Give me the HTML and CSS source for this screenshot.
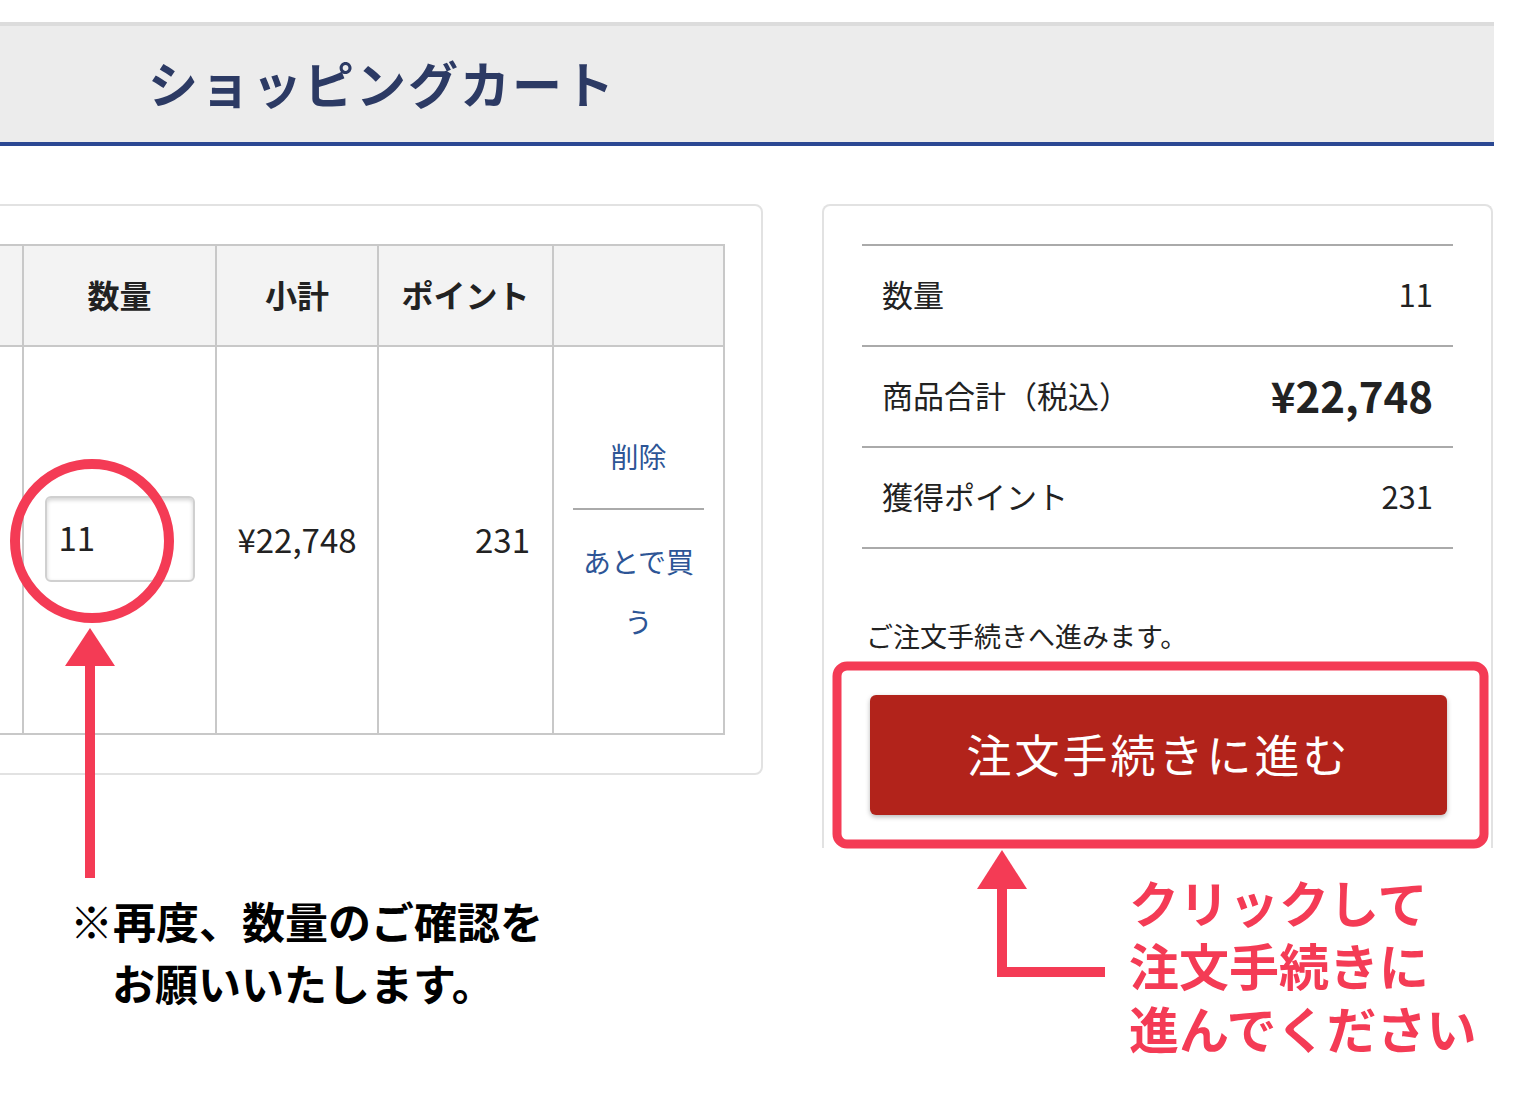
FILE: index.html
```html
<!DOCTYPE html>
<html lang="ja">
<head>
  <meta charset="UTF-8">
  <meta name="viewport" content="width=device-width, initial-scale=1.0">
  <title>ショッピングカート</title>
  <link rel="stylesheet" href="styles.css">
</head>
<body>
  <div class="page">
    <!-- ページタイトル -->
    <header class="page-head">
      <h1>ショッピングカート</h1>
    </header>

    <div class="cart">
      <!-- カート商品一覧 -->
      <section class="cart-items">
        <table class="cart-table">
          <thead>
            <tr>
              <th class="col-item"></th>
              <th class="col-qty">数量</th>
              <th class="col-sub">小計</th>
              <th class="col-pt">ポイント</th>
              <th class="col-act"></th>
            </tr>
          </thead>
          <tbody>
            <tr>
              <td class="cell-item"></td>
              <td class="cell-qty"><input class="qty-input" type="text" value="11"></td>
              <td class="cell-sub">¥22,748</td>
              <td class="cell-pt">231</td>
              <td class="cell-act">
                <a href="#" class="act-link">削除</a>
                <hr class="act-sep">
                <a href="#" class="act-link">あとで買う</a>
              </td>
            </tr>
          </tbody>
        </table>
      </section>

      <!-- 合計 -->
      <aside class="summary">
        <dl class="summary-list">
          <div class="summary-row">
            <dt>数量</dt>
            <dd>11</dd>
          </div>
          <div class="summary-row">
            <dt>商品合計（税込）</dt>
            <dd class="total">¥22,748</dd>
          </div>
          <div class="summary-row">
            <dt>獲得ポイント</dt>
            <dd>231</dd>
          </div>
        </dl>
        <p class="summary-note">ご注文手続きへ進みます。</p>
        <button type="button" class="btn-order">注文手続きに進む</button>
      </aside>
    </div>

    <!-- 注釈 -->
    <svg class="marks" width="1540" height="1100" viewBox="0 0 1540 1100">
      <circle cx="92" cy="541" r="77" fill="none" stroke="#f43b55" stroke-width="10"/>
      <polygon points="90,628 65,666 115,666" fill="#f43b55"/>
      <rect x="85" y="664" width="10" height="214" fill="#f43b55"/>
      <rect x="837" y="666" width="647" height="178" rx="10" fill="none" stroke="#f43b55" stroke-width="9"/>
      <polygon points="1002,850 977,889 1027,889" fill="#f43b55"/>
      <rect x="997" y="887" width="10" height="90" fill="#f43b55"/>
      <rect x="997" y="967" width="108" height="10" fill="#f43b55"/>
    </svg>
    <p class="note note-qty">
      <span class="line">※再度、数量のご確認を</span>
      <span class="line indent">お願いいたします。</span>
    </p>
    <p class="note note-order">
      <span class="line">クリックして</span>
      <span class="line">注文手続きに</span>
      <span class="line">進んでください</span>
    </p>
  </div>
</body>
</html>
```

FILE: styles.css
```css
:root {
  --navy:     #2c3a64;
  --blue:     #2b4893;
  --link:     #2d5596;
  --line:     #c8c8c8;
  --rule:     #aaaaaa;
  --card:     #e2e2e2;
  --order:    #b2231b;
  --mark:     #f43b55;
  --text:     #222;
}
* { box-sizing: border-box; }
body {
  margin: 0;
  font-family: "Noto Sans CJK JP", sans-serif;
  color: var(--text);
  background: #fff;
}
.page {
  position: relative;
  width: 1494px;
  height: 1100px;
  padding-top: 22px;
}
/* タイトル */
.page-head {
  background: #ececec;
  border-top: 4px solid #dcdcdc;
  border-bottom: 4px solid var(--blue);
}
.page-head h1 {
  margin: 0;
  padding-left: 148px;
  height: 116px;
  line-height: 112px;
  font-size: 50px;
  font-weight: bold;
  letter-spacing: 2px;
  color: var(--navy);
}
/* カート */
.cart {
  display: flex;
  align-items: flex-start;
  gap: 59px;
  margin-top: 58px;
}
.cart-items {
  margin-left: -420px;
  width: 1183px;
  flex-shrink: 0;
  background: #fff;
  border: 2px solid var(--card);
  border-radius: 8px;
  padding: 38px;
}
.cart-table {
  width: 1103px;
  table-layout: fixed;
  border-collapse: collapse;
  border: 2px solid var(--line);
}
.cart-table th,
.cart-table td {
  border: 2px solid var(--line);
  padding: 0;
  text-align: center;
  vertical-align: middle;
}
.cart-table th {
  height: 101px;
  padding-bottom: 4px;
  background: #f3f3f3;
  font-size: 32px;
  font-weight: bold;
  color: var(--text);
}
.cart-table td {
  height: 388px;
  padding-bottom: 3px;
  font-size: 33px;
}
.col-item { width: 402px; }
.col-qty  { width: 193px; }
.col-sub  { width: 162px; }
.col-pt   { width: 175px; }
.col-act  { width: 171px; }
.qty-input {
  width: 150px;
  height: 86px;
  padding: 0 12px 3px;
  border: 2px solid #d0d0d0;
  border-radius: 6px;
  box-shadow: inset 0 2px 4px rgba(0, 0, 0, 0.18);
  font-family: inherit;
  font-size: 33px;
  color: var(--text);
  background: #fff;
}
.cart-table td.cell-pt {
  text-align: right;
  padding-right: 22px;
}
.cart-table td.cell-act {
  padding: 0 19px 4px;
}
.act-link {
  display: block;
  font-size: 28px;
  line-height: 60px;
  color: var(--link);
  text-decoration: none;
}
.act-sep {
  margin: 22px 0 21px;
  border: none;
  border-top: 2px solid var(--rule);
}
/* 合計 */
.summary {
  width: 671px;
  height: 644px;
  flex-shrink: 0;
  border: 2px solid var(--card);
  border-bottom: none;
  border-radius: 8px 8px 0 0;
  padding: 38px 38px 0;
}
.summary-list {
  margin: 0;
  border-bottom: 2px solid var(--rule);
}
.summary-row {
  display: flex;
  align-items: center;
  justify-content: space-between;
  height: 101px;
  padding: 0 20px 4px;
  border-top: 2px solid var(--rule);
}
.summary-row dt,
.summary-row dd {
  margin: 0;
  font-size: 31px;
}
.summary-row dd.total {
  font-size: 42px;
  font-weight: bold;
}
.summary-note {
  margin: 68px 0 0 4px;
  font-size: 27px;
  line-height: 38px;
}
.btn-order {
  display: block;
  width: 577px;
  height: 120px;
  margin: 40px 0 0 8px;
  padding-bottom: 4px;
  border: none;
  border-radius: 6px;
  background: var(--order);
  box-shadow: 0 2px 5px rgba(0, 0, 0, 0.28);
  font-family: inherit;
  font-size: 45px;
  letter-spacing: 3px;
  color: #fff;
  cursor: pointer;
}
/* 注釈 */
.marks {
  position: absolute;
  top: 0;
  left: 0;
  pointer-events: none;
}
.note {
  position: absolute;
  margin: 0;
  font-weight: bold;
}
.note .line {
  display: block;
  white-space: nowrap;
}
.note-qty {
  left: 70px;
  top: 889px;
  font-size: 43px;
  line-height: 62px;
  color: #000;
}
.note-qty .indent {
  padding-left: 42px;
}
.note-order {
  left: 1129px;
  top: 870px;
  font-size: 50px;
  line-height: 63px;
  color: var(--mark);
}
```
